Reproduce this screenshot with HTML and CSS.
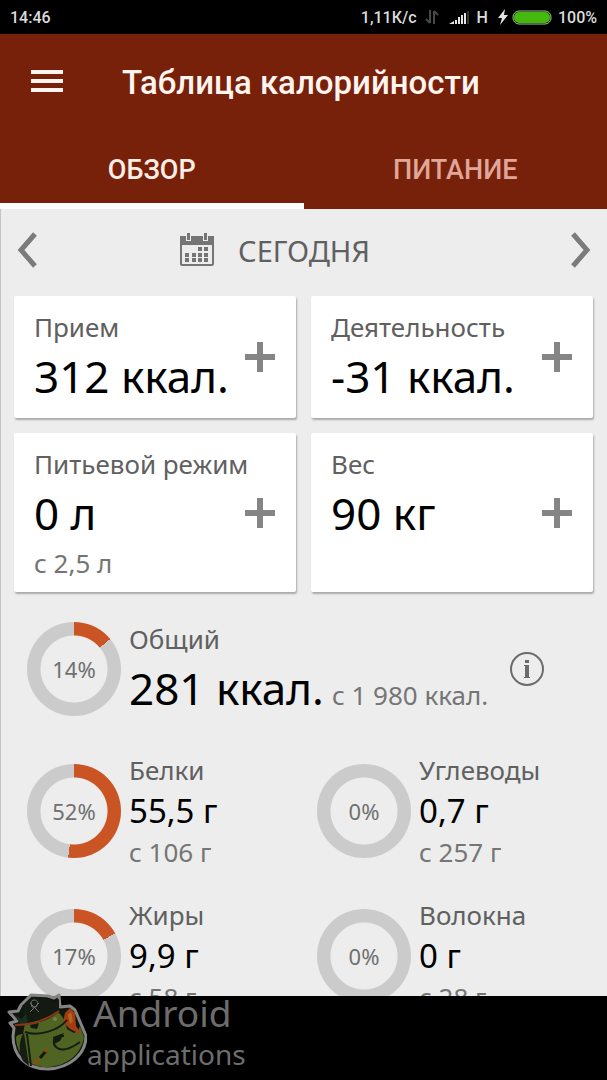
FILE: index.html
```html
<!DOCTYPE html>
<html lang="ru">
<head>
  <meta charset="UTF-8">
  <meta name="viewport" content="width=device-width, initial-scale=1">
  <title>Таблица калорийности</title>
  <link rel="stylesheet" href="styles.css">
</head>
<body>
  <div class="status-bar">
    <span class="time">14:46</span>
    <span>1,11К/с</span>
    <svg class="icon-data" width="14" height="16" viewBox="0 0 14 16" fill="none" stroke="#484848" stroke-width="2">
      <path d="M5 1v13M5 14L1 10M9 15V2M9 2l4 4"/>
    </svg>
    <svg class="icon-signal" width="20" height="14" viewBox="0 0 20 14">
      <path fill="#e4e4e4" d="M0 13l5-3v3zM6 9h2v4H6zM9 6h2v7H9zM12 4h2v9h-2zM15 2h2v11h-2z"/>
      <path fill="#333" d="M18 0h2v13h-2z"/>
    </svg>
    <span class="net">H</span>
    <svg class="icon-bolt" width="10" height="16" viewBox="0 0 10 16">
      <path fill="#e4e4e4" d="M7 0L0 9h4l-2 7 8-10H6z"/>
    </svg>
    <svg class="icon-battery" width="40" height="15" viewBox="0 0 40 15">
      <rect x="1" y="1" width="38" height="13" rx="6" fill="#000" stroke="#a5c79a" stroke-width="1"/>
      <rect x="2" y="2" width="36" height="11" rx="5" fill="#45b80d"/>
    </svg>
    <span>100%</span>
  </div>

  <header class="app-bar">
    <div class="title-row">
      <button class="menu-btn" aria-label="Меню">
        <svg width="32" height="22" viewBox="0 0 32 22" fill="#fff4ee">
          <path d="M0 0h32v4H0zM0 9h32v4H0zM0 18h32v4H0z"/>
        </svg>
      </button>
      <h1>Таблица калорийности</h1>
    </div>
    <nav class="tabs">
      <a href="#overview" class="tab active">ОБЗОР</a>
      <a href="#food" class="tab">ПИТАНИЕ</a>
    </nav>
  </header>

  <main class="content">
    <div class="date-row">
      <button class="arrow" aria-label="Назад">
        <svg width="20" height="36" viewBox="0 0 20 36" fill="none" stroke="#7b7b7b" stroke-width="5">
          <path d="M18 2L4 18l14 16"/>
        </svg>
      </button>
      <button class="date-btn">
        <svg width="34" height="34" viewBox="0 0 34 34">
          <rect x="1" y="4" width="32" height="28" rx="1" fill="none" stroke="#757575" stroke-width="2"/>
          <path fill="#757575" d="M0 3h34v9H0z"/>
          <path fill="#ededed" d="M6 0h5v8H6zM23 0h5v8h-5z"/>
          <path fill="#757575" d="M7 0h3v7H7zM24 0h3v7h-3z"/>
          <path fill="#757575" d="M18 14h4v4h-4zM24 14h4v4h-4zM5 20h4v4H5zM12 20h4v4h-4zM18 20h4v4h-4zM24 20h4v4h-4zM5 25h4v4H5zM12 25h4v4h-4zM18 25h4v4h-4zM24 25h4v4h-4z"/>
        </svg>
        <span>СЕГОДНЯ</span>
      </button>
      <button class="arrow" aria-label="Вперёд">
        <svg width="20" height="36" viewBox="0 0 20 36" fill="none" stroke="#7b7b7b" stroke-width="5">
          <path d="M2 2l14 16L2 34"/>
        </svg>
      </button>
    </div>

    <section class="cards">
      <div class="card">
        <div>
          <div class="label">Прием</div>
          <div class="value">312 ккал.</div>
        </div>
        <button class="plus" aria-label="Добавить прием"></button>
      </div>
      <div class="card">
        <div>
          <div class="label">Деятельность</div>
          <div class="value">-31 ккал.</div>
        </div>
        <button class="plus" aria-label="Добавить деятельность"></button>
      </div>
      <div class="card">
        <div>
          <div class="label">Питьевой режим</div>
          <div class="value">0 л</div>
          <div class="sub">с 2,5 л</div>
        </div>
        <button class="plus" aria-label="Добавить воду"></button>
      </div>
      <div class="card">
        <div>
          <div class="label">Вес</div>
          <div class="value">90 кг</div>
        </div>
        <button class="plus" aria-label="Добавить вес"></button>
      </div>
    </section>

    <section class="total">
      <div class="ring" style="--p: 14"><span>14%</span></div>
      <div class="total-text">
        <div class="label">Общий</div>
        <div class="total-line">
          <span class="value">281 ккал.</span>
          <span class="sub">с 1 980 ккал.</span>
        </div>
      </div>
      <button class="info" aria-label="Информация">
        <svg width="36" height="36" viewBox="0 0 36 36">
          <circle cx="18" cy="18" r="16" fill="none" stroke="#6c6c6c" stroke-width="2"/>
          <path fill="#6c6c6c" d="M16 9h4v3h-4zM16 14h4v12h1v1h-6v-1h1v-11h-1v-1z"/>
        </svg>
      </button>
    </section>

    <section class="stats">
      <div class="stat">
        <div class="ring" style="--p: 52"><span>52%</span></div>
        <div>
          <div class="label">Белки</div>
          <div class="amount">55,5 г</div>
          <div class="sub">с 106 г</div>
        </div>
      </div>
      <div class="stat">
        <div class="ring" style="--p: 0"><span>0%</span></div>
        <div>
          <div class="label">Углеводы</div>
          <div class="amount">0,7 г</div>
          <div class="sub">с 257 г</div>
        </div>
      </div>
      <div class="stat">
        <div class="ring" style="--p: 17"><span>17%</span></div>
        <div>
          <div class="label">Жиры</div>
          <div class="amount">9,9 г</div>
          <div class="sub">с 58 г</div>
        </div>
      </div>
      <div class="stat">
        <div class="ring" style="--p: 0"><span>0%</span></div>
        <div>
          <div class="label">Волокна</div>
          <div class="amount">0 г</div>
          <div class="sub">с 28 г</div>
        </div>
      </div>
    </section>
  </main>

  <footer class="bottom-bar">
    <div class="watermark">
      <svg width="80" height="80" viewBox="0 0 80 80">
        <path fill="#11160f" stroke="#858585" stroke-width="3" stroke-linejoin="round" d="M14 12L24 2l17 1 6 2 5-3 1 12 10-1 5 4 6 14 5 12c0 18-16 32-38 33C18 76 6 62 6 43l1-8-4-5 7-2-8-9 9-1z"/>
        <path fill="#4f6423" d="M18 30c14 1 26-4 33-11 5 4 8 11 9 17l7 4c3-1 5-4 6-7l4 11c-2 16-16 29-36 30C23 75 9 62 9 44c1-2 4-3 7-3z"/>
        <path fill="#131a11" d="M15 13L25 4l17 1 4 4 6-3v13c-9 6-21 10-33 11z"/>
        <path fill="#17301e" d="M7 22l8 4 4-6 2 9-6 4z"/>
        <path fill="none" stroke="#8d3515" stroke-width="2" d="M8 32c13 0 30-4 44-14"/>
        <path fill="#a13c13" d="M58 20l5-5 5 5 1 13 6 9-12-6-7-7z"/>
        <path fill="#b2671b" d="M61 22l3-3 2 9-3 3z"/>
        <path fill="none" stroke="#151c12" stroke-width="2" d="M18 39c14 5 34-2 42-12M20 41l4 32M57 43c-9-1-13 6-8 11 6 6 17 0 24-5"/>
        <path fill="#151c12" d="M17 40c-5 5-6 20-1 28l6 5z"/>
        <path fill="#121b11" d="M23 32l9-2-2 6-6-1zM46 44l11-4-4 8-6 3z"/>
        <path stroke="#131a11" stroke-width="3" d="M33 65l6-7"/>
        <path stroke="#8b4a14" stroke-width="3" d="M27 71l5-5M38 59l2-3"/>
        <path fill="none" stroke="#717171" stroke-width="1" d="M23 10l9 9M32 10l-9 9M24 10c0-4 6-4 7 0l-2 4h-4z"/>
        <circle cx="48" cy="26" r="2" fill="#738349"/>
      </svg>
      <div class="watermark-text">
        <span class="brand">Android</span>
        <span class="brand-sub">applications</span>
      </div>
    </div>
  </footer>
</body>
</html>
```
FILE: styles.css
```css
* {
  box-sizing: border-box;
}
body {
  margin: 0;
  height: 100vh;
  display: flex;
  flex-direction: column;
  overflow: hidden;
  background: #000;
  font-family: "Noto Sans", "Open Sans", sans-serif;
}
button {
  border: none;
  background: none;
  padding: 0;
  color: inherit;
  font-family: inherit;
  cursor: pointer;
}
svg {
  display: block;
}

/* status bar */
.status-bar {
  flex: none;
  display: flex;
  align-items: center;
  height: 34px;
  padding: 0 10px;
  background: #000;
  color: #dcdcdc;
  font: 500 16px Roboto, sans-serif;
}
.time {
  margin-right: auto;
}
.icon-data {
  margin-left: 8px;
}
.icon-signal {
  margin: 2px 8px 0 10px;
}
.net {
  margin-right: 10px;
}
.icon-battery {
  margin: 0 6px 0 4px;
}

/* header */
.app-bar {
  flex: none;
  background: #77200a;
  font-family: Roboto, sans-serif;
}
.title-row {
  display: flex;
  align-items: center;
  gap: 59px;
  height: 97px;
  padding-left: 31px;
}
.menu-btn {
  padding-bottom: 4px;
}
h1 {
  margin: 0;
  color: #fff4ee;
  font-size: 33px;
  font-weight: 500;
}
.tabs {
  display: flex;
}
.tab {
  flex: 1;
  height: 78px;
  border-bottom: 6px solid transparent;
  color: #e0a699;
  font-size: 27px;
  font-weight: 500;
  line-height: 78px;
  text-align: center;
  text-decoration: none;
}
.tab.active {
  color: #fdeee6;
  border-color: #fff;
}

/* overview */
.content {
  flex: 1;
  min-height: 0;
  overflow: hidden;
  background: #ededed;
  border-left: 1px solid #c4c4c4;
}
.date-row {
  display: flex;
  align-items: center;
  justify-content: space-between;
  height: 82px;
  padding: 0 16px;
  color: #606060;
}
.date-btn {
  flex: 1;
  display: grid;
  grid-template-columns: 1fr auto 1fr;
  align-items: center;
  gap: 24px;
  font-size: 29px;
}
.date-btn svg {
  justify-self: end;
}
.cards {
  display: grid;
  grid-template-columns: 1fr 1fr;
  gap: 15px;
  padding: 5px 14px 0 13px;
}
.card {
  display: flex;
  align-items: center;
  justify-content: space-between;
  padding: 14px 21px 10px 20px;
  background: #fff;
  border-radius: 2px;
  box-shadow: 1px 2px 2px #aaa;
}
.card > div {
  align-self: flex-start;
}
.label {
  color: #606060;
  font-size: 26px;
  line-height: 34px;
  white-space: nowrap;
}
.value {
  color: #000;
  font-size: 44px;
  line-height: 64px;
  white-space: nowrap;
}
.sub {
  color: #757575;
  font-size: 26px;
  line-height: 37px;
  white-space: nowrap;
}
.plus {
  flex: none;
  width: 30px;
  height: 30px;
  margin: 0 0 4px -30px;
  background:
    linear-gradient(#858585, #858585) center / 30px 6px no-repeat,
    linear-gradient(#858585, #858585) center / 6px 30px no-repeat;
}

/* rings */
.ring {
  flex: none;
  display: grid;
  place-items: center;
  width: 94px;
  height: 94px;
  border-radius: 50%;
  background:
    radial-gradient(circle, #ededed 33px, transparent 34px),
    conic-gradient(#cb5424 calc(var(--p) * 1%), #cbcbcb 0);
  color: #707070;
  font-size: 22px;
}
.total,
.stat {
  display: flex;
  align-items: center;
  gap: 8px;
}
.total {
  padding: 26px 62px 0 26px;
}
.total-text {
  padding-top: 4px;
}
.total-line {
  display: flex;
  align-items: baseline;
  gap: 8px;
}
.info {
  margin-left: auto;
}
.stats {
  display: grid;
  grid-template-columns: 1fr 1fr;
  row-gap: 29px;
  padding: 33px 0 0 26px;
}
.amount {
  color: #000;
  font-size: 33px;
  line-height: 48px;
}
.stat .sub {
  line-height: 34px;
}

/* bottom */
.bottom-bar {
  position: relative;
  flex: none;
  height: 84px;
  background: #000;
}
.watermark {
  position: absolute;
  left: 7px;
  bottom: 7px;
  display: flex;
  align-items: flex-end;
  color: #6d6d6d;
}
.watermark-text {
  display: flex;
  flex-direction: column;
}
.brand {
  padding-left: 6px;
  font-size: 37px;
  line-height: 44px;
}
.brand-sub {
  font-size: 28px;
  line-height: 38px;
}
```
